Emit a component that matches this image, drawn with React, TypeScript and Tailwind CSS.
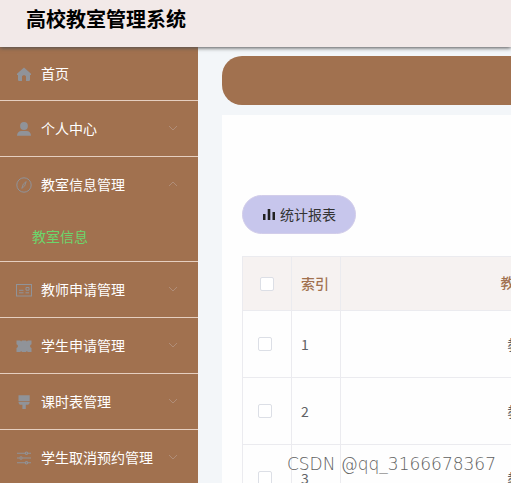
import type { ReactNode } from "react";

const icons: Record<string, ReactNode> = {
  home: (
    <path
      fill="currentColor"
      d="M8 1.600 1 7.800v1.100h1v5.200c0 .5.3.8.8.8h3.200V10.700c0-.8.9-1.400 2-1.400s2 .6 2 1.400v4.200h3.200c.5 0 .8-.3.8-.8V8.900h1V7.800z"
    />
  ),
  user: (
    <g fill="currentColor">
      <circle cx="8" cy="5" r="3.900" />
      <path d="M1 14.800c0-3.300 2-4.800 4.300-4.800h5.400c2.300 0 4.300 1.500 4.300 4.800z" />
    </g>
  ),
  compass: (
    <g fill="none" stroke="currentColor">
      <circle cx="8" cy="8" r="7.200" />
      <path d="m10.200 4.600-1.500 4.300-2.900 2.500 1.500-4.300z" strokeWidth=".9" />
    </g>
  ),
  postcard: (
    <g fill="none" stroke="currentColor">
      <rect x=".5" y="2.500" width="15" height="11.500" />
      <path d="M3 10.800h4.500M3 8.300h4.500M10 5.500h3v2.700h-3zM9.500 10.800H13" />
    </g>
  ),
  ticket: (
    <path
      fill="currentColor"
      d="M.5 2.500h3.700l.9 1 .9-1h4l.9 1 .9-1h3.700v3.700a1.900 1.900 0 0 0 0 3.700v4h-3.700l-.9-1-.9 1H6l-.9-1-.9 1H.5v-4a1.900 1.900 0 0 0 0-3.700z"
    />
  ),
  brush: (
    <path
      fill="currentColor"
      d="M2.500 1.200h11.200v6H2.500zM2.500 8h11.200c0 2-1.200 2.800-3 2.800H9.800V14.900H6.400v-4.100h-.9c-1.800 0-3-.8-3-2.800z"
    />
  ),
  sliders: (
    <g fill="none" stroke="currentColor" strokeWidth="1.100">
      <path d="M1 3.200h8M12 3.200h3M1 8h2.500M6.500 8H15M1 12.800h8M12 12.800h3" />
      <circle cx="10.500" cy="3.200" r="1.200" />
      <circle cx="5" cy="8" r="1.200" />
      <circle cx="10.500" cy="12.800" r="1.200" />
    </g>
  ),
};

type Item = { label: string; icon: string; children?: string[] };

const menu: Item[] = [
  { label: "个人中心", icon: "user" },
  { label: "教室信息管理", icon: "compass", children: ["教室信息"] },
  { label: "教师申请管理", icon: "postcard" },
  { label: "学生申请管理", icon: "ticket" },
  { label: "课时表管理", icon: "brush" },
  { label: "学生取消预约管理", icon: "sliders" },
];

const rows = [
  { id: 1, name: "教室一" },
  { id: 2, name: "教室二" },
  { id: 3, name: "教室三" },
];

function MenuIcon({ name }: { name: string }) {
  return (
    <svg viewBox="0 0 16 16" className="size-4 shrink-0 text-[#909399]" aria-hidden="true">
      {icons[name]}
    </svg>
  );
}

function MenuGroup({ item }: { item: Item }) {
  const open = Boolean(item.children);
  return (
    <li className="border-b border-[#e6cfc0]">
      <button
        type="button"
        aria-expanded={open}
        className="flex h-[55px] w-full items-center gap-[9px] pr-5 pl-4 text-left"
      >
        <MenuIcon name={item.icon} />
        <span className="flex-1 pb-0.5">{item.label}</span>
        <svg
          viewBox="0 0 10 10"
          className="mb-0.5 size-2.5 text-[#b08d78]"
          fill="none"
          stroke="currentColor"
          aria-hidden="true"
        >
          <path d={open ? "M1 7l4-4 4 4" : "M1 3l4 4 4-4"} />
        </svg>
      </button>
      {item.children?.map((child) => (
        <a key={child} href="#" className="flex h-[49px] items-center pb-0.5 pl-8 text-[#6cd66c]">
          {child}
        </a>
      ))}
    </li>
  );
}

const box = "block size-3.5 appearance-none rounded-xs border border-[#dcdfe6] bg-white";
const cell = "border border-[#ebebef]";

export default function App() {
  return (
    <div className="relative flex h-screen flex-col overflow-hidden bg-[#f3f6f9] font-['Noto_Sans_CJK_SC',sans-serif] text-[14px] leading-5">
      <header className="z-10 flex h-[47px] shrink-0 items-center bg-[#f2e9e8] px-[26px] pb-2.5 shadow-[0_1px_4px_#505050]">
        <h1 className="text-[20px] leading-7 font-bold text-black">高校教室管理系统</h1>
      </header>

      <div className="flex min-h-0 flex-1">
        <nav className="w-[198px] shrink-0 overflow-hidden bg-[#a1714f] text-white">
          <ul>
            <li className="border-b border-[#e6cfc0]">
              <a href="#" className="flex h-[53px] items-center gap-[9px] pl-4">
                <MenuIcon name="home" />
                <span className="pb-0.5">首页</span>
              </a>
            </li>
            {menu.map((item) => (
              <MenuGroup key={item.label} item={item} />
            ))}
          </ul>
        </nav>

        <main className="flex min-w-0 flex-1 flex-col gap-2.5 overflow-hidden pt-[9px] pl-6">
          <div className="h-[49px] shrink-0 rounded-l-[20px] bg-[#a1714f]" />
          <section className="flex-1 bg-[#fefefe] pt-20 pl-5">
            <button
              type="button"
              className="flex h-[39px] items-center gap-1 rounded-full border border-[#d2cdea] bg-[#c7c6ec] px-[19px] text-[#333]"
            >
              <svg viewBox="0 0 14 14" className="size-3.5" fill="#222" aria-hidden="true">
                <path d="M1 6h2.500v6H1zM5.700 1h2.600v11H5.700zM10.500 4H13v8h-2.500z" />
              </svg>
              <span className="pb-0.5">统计报表</span>
            </button>

            <table className="mt-[22px] w-full min-w-[475px] table-fixed border-collapse text-[#606266]">
              <colgroup>
                <col className="w-[49px]" />
                <col className="w-[49px]" />
                <col />
              </colgroup>
              <thead>
                <tr className="h-[54px] bg-[#f6f2f1] text-[#a1714f]">
                  <th className={`${cell} pl-[17px]`}>
                    <input type="checkbox" aria-label="全选" className={box} />
                  </th>
                  <th className={`${cell} pb-0.5 pl-[9px] text-left font-medium`}>索引</th>
                  <th className={`${cell} pb-1 text-center font-medium`}>教室名称</th>
                </tr>
              </thead>
              <tbody>
                {rows.map((row) => (
                  <tr key={row.id} className="h-[67px]">
                    <td className={`${cell} pl-[15px]`}>
                      <input type="checkbox" aria-label={row.name} className={box} />
                    </td>
                    <td className={`${cell} pl-[9px]`}>{row.id}</td>
                    <td className={`${cell} text-center`}>{row.name}</td>
                  </tr>
                ))}
              </tbody>
            </table>
          </section>
        </main>
      </div>

      <p className="absolute right-[15px] bottom-[7px] z-20 font-['DejaVu_Sans',Verdana,sans-serif] text-[17px] leading-6 font-extralight text-[#606060]">
        CSDN @qq_3166678367
      </p>
    </div>
  );
}
